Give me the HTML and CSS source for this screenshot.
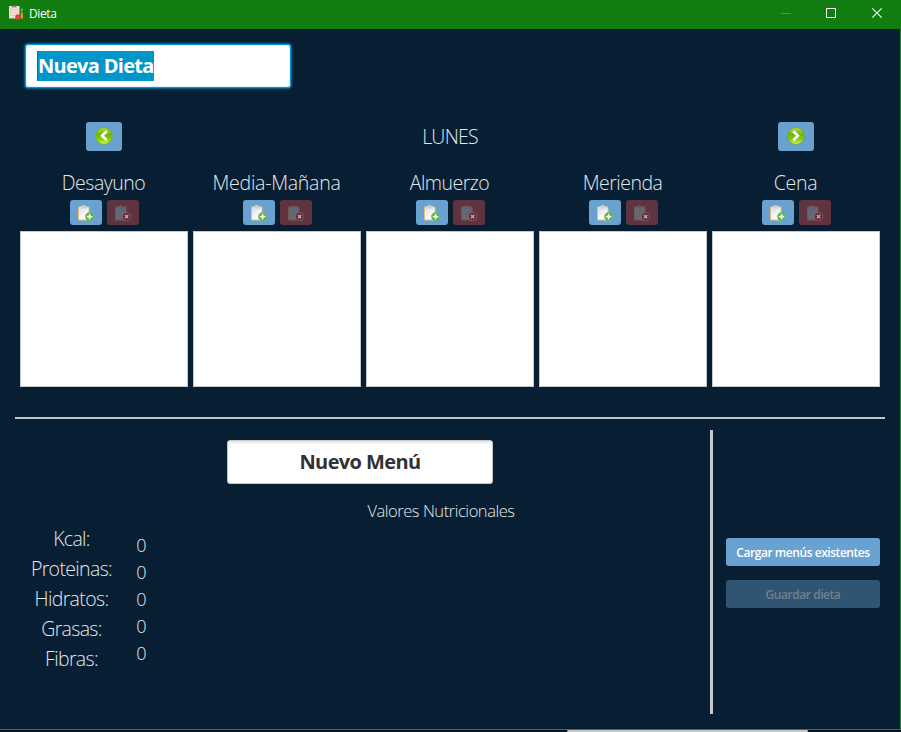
FILE: index.html
```html
<!DOCTYPE html>
<html lang="es">
<head>
<meta charset="utf-8">
<title>Dieta</title>
<link rel="stylesheet" href="styles.css">
</head>
<body>
<svg class="defs" width="0" height="0" aria-hidden="true">
  <defs>
    <linearGradient id="paper" x1="0" y1="0" x2="0.6" y2="1"><stop offset="0" stop-color="#d5dde5"/><stop offset="0.6" stop-color="#f3f3f3"/><stop offset="1" stop-color="#fff"/></linearGradient>
    <linearGradient id="ball" x1="0" y1="0" x2="0" y2="1"><stop offset="0" stop-color="#b4dc50"/><stop offset="0.4" stop-color="#74b40e"/><stop offset="0.7" stop-color="#86cf08"/><stop offset="1" stop-color="#d8fa5a"/></linearGradient>
    <symbol id="clip" viewBox="0 0 16 16">
      <path d="M.5 2h10.5v13H.5z" fill="url(#paper)" stroke="#dcc27c"/>
      <path d="M2.3 3.7V1.7h1.6Q4.3.2 5.6.2T7.3 1.7h1.6v2z" fill="#c9d0d6" stroke="#e6ebef" stroke-width=".5"/>
    </symbol>
    <symbol id="add" viewBox="0 0 16 16">
      <use href="#clip"/>
      <circle cx="11.6" cy="11.6" r="4.2" fill="#4caf32" stroke="#7fc56c" stroke-width=".6"/>
      <path d="M11.6 8.8v5.6M8.8 11.6h5.6" stroke="#fff" stroke-width="1.6"/>
    </symbol>
    <symbol id="del" viewBox="0 0 16 16">
      <path d="M.5 2h10.5v13H.5z" fill="#626874" stroke="#75584a"/>
      <path d="M2.3 3.7V1.7h1.6Q4.3.2 5.6.2T7.3 1.7h1.6v2z" fill="#596270"/>
      <circle cx="11.6" cy="11.6" r="4.1" fill="#642832" stroke="#8a666e" stroke-width=".8"/>
      <path d="M10 10l3.2 3.2M13.2 10L10 13.2" stroke="#b5abb2" stroke-width="1.5"/>
    </symbol>
    <symbol id="prev" viewBox="0 0 18 18">
      <circle cx="9" cy="9" r="8.4" fill="url(#ball)" stroke="#6aa31c" stroke-width=".7"/>
      <path d="M11.7 4.3L7.1 8.8l4.6 4.5" fill="none" stroke="#fff" stroke-width="2.6"/>
    </symbol>
  </defs>
</svg>
<div class="window">
  <header class="titlebar">
    <svg class="app-icon" width="16" height="16" viewBox="0 0 16 16">
      <path d="M1 1h10.5v12.5H1z" fill="#f2ddd2"/>
      <path d="M4 .5h4.5v1.8H4z" fill="#8d7680"/>
      <path d="M2.3 4h1.2M2.3 7h1.2M2.3 10h1.2" stroke="#e5a39b"/>
      <path d="M4.5 4.5h5M4.5 7.5h5M4.5 10.5h2" stroke="#dcc6c6" stroke-width=".8"/>
      <circle cx="10" cy="12" r="2.8" fill="#e04440"/>
      <path d="M12.8 7.5h2.2v6h-2.2z" fill="#ef8b2c"/>
      <path d="M13 3.5h1.6v3H13z" fill="#84b15d"/>
    </svg>
    <span class="title">Dieta</span>
    <svg class="win-controls" width="104" height="12" viewBox="0 0 104 12">
      <path d="M0 6.5h10" stroke="#4b9b4b"/>
      <path d="M45.5 1.5h9v9h-9z" fill="none" stroke="#fff"/>
      <path d="M91.3 1.3l9.4 9.4M100.7 1.3l-9.4 9.4" stroke="#fff" stroke-width="1.1"/>
    </svg>
  </header>
  <main class="content">
    <div class="field diet-name"><span class="selection">Nueva Dieta</span></div>
    <nav class="days">
      <button class="btn nav-btn"><svg width="18" height="18"><use href="#prev"/></svg></button>
      <div class="day">LUNES</div>
      <button class="btn nav-btn"><svg class="flip" width="18" height="18"><use href="#prev"/></svg></button>
    </nav>
    <section class="meals">
      <div class="meal"><h2>Desayuno</h2><div class="tools"><button class="btn tool"><svg width="16" height="16"><use href="#add"/></svg></button><button class="btn tool remove"><svg width="16" height="16"><use href="#del"/></svg></button></div><div class="list"></div></div>
      <div class="meal"><h2 class="wide">Media-Mañana</h2><div class="tools"><button class="btn tool"><svg width="16" height="16"><use href="#add"/></svg></button><button class="btn tool remove"><svg width="16" height="16"><use href="#del"/></svg></button></div><div class="list"></div></div>
      <div class="meal"><h2>Almuerzo</h2><div class="tools"><button class="btn tool"><svg width="16" height="16"><use href="#add"/></svg></button><button class="btn tool remove"><svg width="16" height="16"><use href="#del"/></svg></button></div><div class="list"></div></div>
      <div class="meal"><h2>Merienda</h2><div class="tools"><button class="btn tool"><svg width="16" height="16"><use href="#add"/></svg></button><button class="btn tool remove"><svg width="16" height="16"><use href="#del"/></svg></button></div><div class="list"></div></div>
      <div class="meal"><h2 class="wide">Cena</h2><div class="tools"><button class="btn tool"><svg width="16" height="16"><use href="#add"/></svg></button><button class="btn tool remove"><svg width="16" height="16"><use href="#del"/></svg></button></div><div class="list"></div></div>
    </section>
    <div class="rule"></div>
    <section class="bottom">
      <div class="menu">
        <div class="field menu-name"><span>Nuevo Menú</span></div>
        <h3>Valores Nutricionales</h3>
        <div class="nutrition">
          <div class="labels"><span>Kcal:</span><span>Proteinas:</span><span>Hidratos:</span><span>Grasas:</span><span>Fibras:</span></div>
          <div class="values"><span>0</span><span>0</span><span>0</span><span>0</span><span>0</span></div>
        </div>
      </div>
      <div class="vrule"></div>
      <div class="actions">
        <button class="btn action">Cargar menús existentes</button>
        <button class="btn action disabled">Guardar dieta</button>
      </div>
    </section>
  </main>
</div>
<div class="below"><div class="thumb"></div></div>
</body>
</html>
```
FILE: styles.css
```css
* { box-sizing: border-box; }
body {
  margin: 0;
  width: 901px;
  height: 732px;
  overflow: hidden;
  background: #061426;
  font-family: "Open Sans", "Noto Sans", sans-serif;
}
.defs { position: absolute; }
svg { display: block; }
.window {
  height: 730px;
  display: flex;
  flex-direction: column;
  background: #081f33;
  border-right: 1px solid #23852b;
  border-bottom: 1px solid #23852b;
}
.titlebar {
  height: 29px;
  margin-right: -1px;
  display: flex;
  align-items: center;
  padding: 0 16px 3px 8px;
  background: #117c10;
}
.title {
  margin-left: 5px;
  padding-top: 2px;
  font-size: 12px;
  line-height: 16px;
  letter-spacing: -0.4px;
  color: #fff;
}
.win-controls { margin-left: auto; }
.content { flex: 1; padding: 15px 15px 0; }
.field {
  width: 266px;
  height: 44px;
  display: flex;
  align-items: center;
  background: #fff;
  border: 1px solid #c4c6c9;
  border-radius: 3px;
  font-size: 20px;
  font-weight: 700;
  line-height: 30px;
  letter-spacing: -0.6px;
  color: #323232;
}
.diet-name {
  margin-left: 10px;
  padding-left: 11px;
  border: 1px solid #0796c9;
  box-shadow: 0 0 2px 1px #04719b, inset 0 0 0 1px #dff2f9;
}
.selection {
  height: 30px;
  width: 117px;
  border-left: 1px solid #555;
  background: #0096c9;
  color: #fff;
  letter-spacing: -0.7px;
  white-space: nowrap;
}
.days {
  display: flex;
  justify-content: space-between;
  align-items: center;
  height: 29px;
  margin: 34px 71px 0;
}
.btn {
  display: flex;
  align-items: center;
  justify-content: center;
  border: 0;
  padding: 0;
  border-radius: 3px;
  background: #69a2d0;
  font-family: inherit;
}
.nav-btn { width: 36px; height: 29px; padding-bottom: 2px; }
.flip { transform: scaleX(-1); }
.day {
  font-size: 19.5px;
  line-height: 27px;
  letter-spacing: -0.75px;
  font-weight: 300;
  color: #e3e8ec;
}
.meals {
  display: grid;
  grid-template-columns: repeat(5, 168px);
  column-gap: 5px;
  margin: 18px 5px 0;
}
.meal h2 {
  margin: 0;
  height: 27px;
  line-height: 27px;
  text-align: center;
  text-indent: -1px;
  font-size: 19.5px;
  font-weight: 300;
  letter-spacing: -0.5px;
  color: #e3e8ec;
}
.meal .wide { letter-spacing: -0.25px; }
.tools {
  display: flex;
  justify-content: center;
  gap: 5px;
  margin: 4px 0 6px;
}
.tool { width: 32px; height: 25px; }
.remove { background: #5f3440; }
.list {
  height: 156px;
  background: #fff;
  border: 1px solid #c8c8c8;
}
.rule { height: 2px; margin-top: 30px; background: #c0c6ca; }
.bottom { display: flex; height: 284px; margin-top: 11px; }
.menu { width: 695px; padding-top: 10px; }
.menu-name {
  justify-content: center;
  margin-left: 212px;
  box-shadow: inset 0 3px 3px -1px #e4e4e4;
}
.menu h3 {
  margin: 15px 0 0 157px;
  text-align: center;
  font-size: 16.5px;
  line-height: 24px;
  font-weight: 300;
  letter-spacing: -0.45px;
  color: #e3e8ec;
}
.nutrition {
  display: flex;
  align-items: center;
  margin-top: 1px;
  font-size: 19.5px;
  font-weight: 300;
  color: #e3e8ec;
}
.labels, .values { display: flex; flex-direction: column; text-align: center; }
.labels { width: 114px; padding-right: 1px; line-height: 30px; letter-spacing: -0.65px; }
.values { width: 25px; line-height: 27px; font-size: 18px; }
.vrule {
  width: 3px;
  background: #c5c8cd;
}
.actions {
  display: flex;
  flex-direction: column;
  gap: 14px;
  padding: 108px 0 0 13px;
}
.action {
  width: 154px;
  height: 28px;
  font-size: 12px;
  font-weight: 600;
  letter-spacing: -0.45px;
  color: #fff;
}
.disabled { background: #2f5572; color: #71808d; }
.below { height: 2px; }
.thumb { width: 241px; height: 2px; margin-left: 567px; background: #c7c8c8; border: solid #8f9798; border-width: 0 1px; }
```
